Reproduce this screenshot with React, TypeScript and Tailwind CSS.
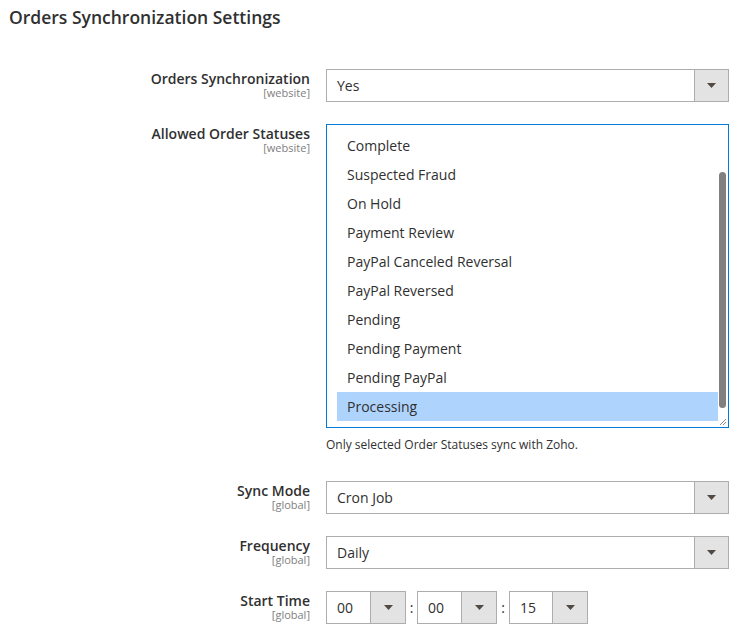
const statuses = [
  "Complete",
  "Suspected Fraud",
  "On Hold",
  "Payment Review",
  "PayPal Canceled Reversal",
  "PayPal Reversed",
  "Pending",
  "Pending Payment",
  "Pending PayPal",
  "Processing",
];

function Arrow() {
  return (
    <svg width="9" height="5" viewBox="0 0 9 5" className="block">
      <path d="M0 0 H9 L4.5 5 Z" fill="#514943" />
    </svg>
  );
}

function Select({ value, width = "w-[403px]", arrow = "w-[34px]" }: { value: string; width?: string; arrow?: string }) {
  return (
    <div className={`flex h-[33px] border border-[#adadad] bg-white ${width}`}>
      <div className="flex flex-1 items-center pl-[10px] text-[14px]">{value}</div>
      <div className={`flex items-center justify-center border-l border-[#adadad] bg-[#e3e3e3] ${arrow}`}>
        <Arrow />
      </div>
    </div>
  );
}

function Label({ title, scope }: { title: string; scope: string }) {
  return (
    <div className="flex w-[310px] shrink-0 flex-col items-end pt-[1px]">
      <span className="text-[14px] font-semibold leading-[17px]">{title}</span>
      <span className="text-[11px] leading-[12px] text-[#808080]">{scope}</span>
    </div>
  );
}

export default function App() {
  return (
    <div className="h-[637px] w-[742px] overflow-hidden bg-white font-['Open_Sans',sans-serif] text-[#303030]">
      <h2 className="pl-[9px] pt-[6px] text-[17.5px] font-semibold leading-[22px] text-[#303030]">
        Orders Synchronization Settings
      </h2>

      <div className="mt-[41px] flex flex-col">
        <div className="flex">
          <Label title="Orders Synchronization" scope="[website]" />
          <div className="ml-4">
            <Select value="Yes" />
          </div>
        </div>

        <div className="mt-[22px] flex">
          <Label title="Allowed Order Statuses" scope="[website]" />
          <div className="ml-4">
            <div className="relative h-[304px] w-[403px] overflow-hidden border border-[#007bdb] bg-white px-[10px] pt-[6px]">
              {statuses.map((s) => (
                <div
                  key={s}
                  className={`h-[29px] pl-[10px] text-[14px] leading-[29px] ${s === "Processing" ? "bg-[#aed3fd]" : ""}`}
                >
                  {s}
                </div>
              ))}
              <div className="absolute right-[2px] top-[47px] h-[236px] w-[7px] rounded-full bg-[#808080]" />
              <svg width="8" height="8" viewBox="0 0 8 8" className="absolute bottom-[1px] right-[1px]">
                <path d="M7 1 L1 7 M7 4 L4 7" stroke="#8a8a8a" strokeWidth="1" />
              </svg>
            </div>
            <p className="mt-[9px] text-[12px] leading-[16px]">Only selected Order Statuses sync with Zoho.</p>
          </div>
        </div>

        <div className="mt-[28px] flex">
          <Label title="Sync Mode" scope="[global]" />
          <div className="ml-4">
            <Select value="Cron Job" />
          </div>
        </div>

        <div className="mt-[22px] flex">
          <Label title="Frequency" scope="[global]" />
          <div className="ml-4">
            <Select value="Daily" />
          </div>
        </div>

        <div className="mt-[22px] flex">
          <Label title="Start Time" scope="[global]" />
          <div className="ml-4 flex items-center">
            <Select value="00" width="w-[80px]" arrow="w-[35px]" />
            <span className="w-[11px] text-center text-[14px]">:</span>
            <Select value="00" width="w-[80px]" arrow="w-[35px]" />
            <span className="w-[12px] text-center text-[14px]">:</span>
            <Select value="15" width="w-[79px]" arrow="w-[35px]" />
          </div>
        </div>
      </div>
    </div>
  );
}
